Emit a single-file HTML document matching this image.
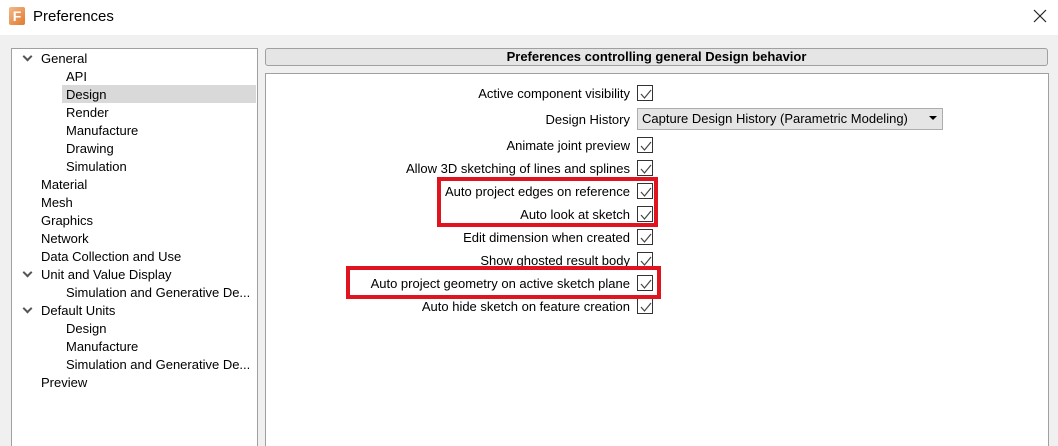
<!DOCTYPE html>
<html style="width:1058px;height:446px;overflow:hidden"><head><style>
*{margin:0;padding:0;box-sizing:border-box}
body{width:1058px;height:446px;overflow:hidden;background:#f0f0f0;font-family:"Liberation Sans",Arial,sans-serif;font-size:13px;color:#000;position:relative}
.abs{position:absolute}
.title{left:0;top:0;width:1058px;height:35px;background:#fff}
.tree{left:11px;top:48px;width:247px;height:398px;background:#fff;border:1px solid #a0a0a0;border-bottom:none}
.ti{position:absolute;white-space:nowrap;line-height:18px;height:18px}
.chev{position:absolute;width:7px;height:7px;border-right:2px solid #555;border-bottom:2px solid #555;transform:rotate(45deg)}
.hdr{left:265px;top:48px;width:783px;height:18px;background:#e5e5e5;border:1px solid #a0a0a0;border-radius:3px;text-align:center;font-weight:bold;line-height:16px}
.content{left:265px;top:73px;width:784px;height:373px;background:#fff;border:1px solid #a0a0a0;border-bottom:none}
.lbl{position:absolute;right:428px;white-space:nowrap;line-height:16px}
.cb{position:absolute;left:637px;width:16px;height:16px;border:1px solid #333;background:#fff}
.cb svg{position:absolute;left:1px;top:1px}
.red{position:absolute;border:4px solid #e0141e}
</style></head><body>
<div class="abs title"></div>
<div class="abs" style="left:9px;top:7px;width:16px;height:18px;background:linear-gradient(135deg,#f3b98a,#e07a2e);border-radius:2px;color:#fff;font-weight:bold;font-size:14px;line-height:18px;text-align:center">F</div>
<div class="abs" style="left:33px;top:8px;font-size:15px;color:#000">Preferences</div>
<svg class="abs" style="left:1033px;top:9px" width="14" height="14"><path d="M1 1L13 13M13 1L1 13" stroke="#222" stroke-width="1.2"/></svg>

<div class="abs tree">
<div class="ti" style="left:50px;top:36px;width:194px;background:#d9d9d9"></div>
<div class="chev" style="left:12px;top:4px"></div>
<div class="ti" style="left:29px;top:1px">General</div>
<div class="ti" style="left:54px;top:19px">API</div>
<div class="ti" style="left:54px;top:37px">Design</div>
<div class="ti" style="left:54px;top:55px">Render</div>
<div class="ti" style="left:54px;top:73px">Manufacture</div>
<div class="ti" style="left:54px;top:91px">Drawing</div>
<div class="ti" style="left:54px;top:109px">Simulation</div>
<div class="ti" style="left:29px;top:127px">Material</div>
<div class="ti" style="left:29px;top:145px">Mesh</div>
<div class="ti" style="left:29px;top:163px">Graphics</div>
<div class="ti" style="left:29px;top:181px">Network</div>
<div class="ti" style="left:29px;top:199px">Data Collection and Use</div>
<div class="chev" style="left:12px;top:220px"></div>
<div class="ti" style="left:29px;top:217px">Unit and Value Display</div>
<div class="ti" style="left:54px;top:235px">Simulation and Generative De...</div>
<div class="chev" style="left:12px;top:256px"></div>
<div class="ti" style="left:29px;top:253px">Default Units</div>
<div class="ti" style="left:54px;top:271px">Design</div>
<div class="ti" style="left:54px;top:289px">Manufacture</div>
<div class="ti" style="left:54px;top:307px">Simulation and Generative De...</div>
<div class="ti" style="left:29px;top:325px">Preview</div>
</div>

<div class="abs hdr">Preferences controlling general Design behavior</div>
<div class="abs content"></div>

<div class="lbl" style="top:86px">Active component visibility</div>
<div class="lbl" style="top:112px">Design History</div>
<div class="lbl" style="top:138px">Animate joint preview</div>
<div class="lbl" style="top:161px">Allow 3D sketching of lines and splines</div>
<div class="lbl" style="top:184px">Auto project edges on reference</div>
<div class="lbl" style="top:207px">Auto look at sketch</div>
<div class="lbl" style="top:230px">Edit dimension when created</div>
<div class="lbl" style="top:253px">Show ghosted result body</div>
<div class="lbl" style="top:276px">Auto project geometry on active sketch plane</div>
<div class="lbl" style="top:299px">Auto hide sketch on feature creation</div>

<div class="abs" style="left:637px;top:108px;width:306px;height:22px;background:#e5e5e5;border:1px solid #adadad;line-height:20px;padding-left:4px;white-space:nowrap">Capture Design History (Parametric Modeling)</div>
<svg class="abs" style="left:929px;top:116px" width="8" height="5"><path d="M0 0H8L4 4Z" fill="#000"/></svg>

<div class="cb" style="top:85px"><svg width="14" height="14"><path d="M2 7L5.5 11L12 3" stroke="#444" fill="none" stroke-width="1.2"/></svg></div>
<div class="cb" style="top:137px"><svg width="14" height="14"><path d="M2 7L5.5 11L12 3" stroke="#444" fill="none" stroke-width="1.2"/></svg></div>
<div class="cb" style="top:160px"><svg width="14" height="14"><path d="M2 7L5.5 11L12 3" stroke="#444" fill="none" stroke-width="1.2"/></svg></div>
<div class="cb" style="top:183px"><svg width="14" height="14"><path d="M2 7L5.5 11L12 3" stroke="#444" fill="none" stroke-width="1.2"/></svg></div>
<div class="cb" style="top:206px"><svg width="14" height="14"><path d="M2 7L5.5 11L12 3" stroke="#444" fill="none" stroke-width="1.2"/></svg></div>
<div class="cb" style="top:229px"><svg width="14" height="14"><path d="M2 7L5.5 11L12 3" stroke="#444" fill="none" stroke-width="1.2"/></svg></div>
<div class="cb" style="top:252px"><svg width="14" height="14"><path d="M2 7L5.5 11L12 3" stroke="#444" fill="none" stroke-width="1.2"/></svg></div>
<div class="cb" style="top:275px"><svg width="14" height="14"><path d="M2 7L5.5 11L12 3" stroke="#444" fill="none" stroke-width="1.2"/></svg></div>
<div class="cb" style="top:298px"><svg width="14" height="14"><path d="M2 7L5.5 11L12 3" stroke="#444" fill="none" stroke-width="1.2"/></svg></div>

<div class="red" style="left:437px;top:177px;width:221px;height:50px"></div>
<div class="red" style="left:346px;top:266px;width:315px;height:33px"></div>
</body></html>
